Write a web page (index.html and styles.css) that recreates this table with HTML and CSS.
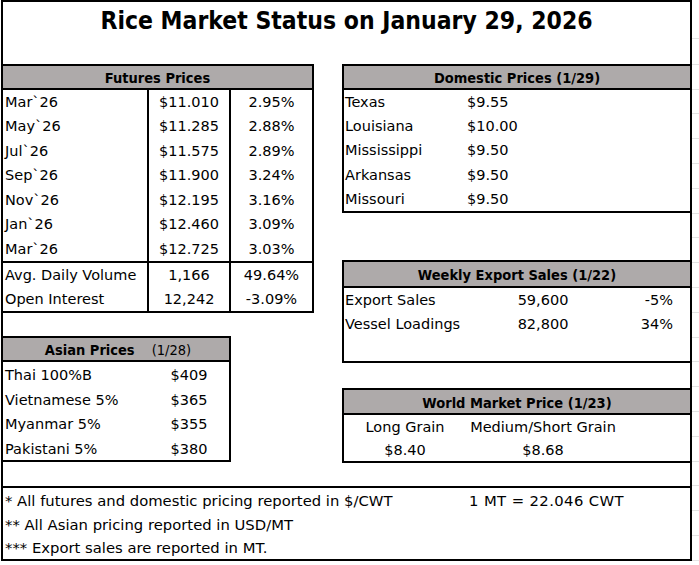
FILE: index.html
```html
<!DOCTYPE html>
<html>
<head>
<meta charset="utf-8">
<link rel="stylesheet" href="styles.css">
</head>
<body>
<div class="page">
  <div class="sheet">
    <div class="title">Rice Market Status on January 29, 2026</div>
    <div class="main">
      <div class="col-left">
        <div class="box futures">
          <div class="hdr">Futures Prices</div>
          <div class="ftable">
            <div class="c1">Mar`26</div><div class="c2">$11.010</div><div class="c3">2.95%</div>
            <div class="c1">May`26</div><div class="c2">$11.285</div><div class="c3">2.88%</div>
            <div class="c1">Jul`26</div><div class="c2">$11.575</div><div class="c3">2.89%</div>
            <div class="c1">Sep`26</div><div class="c2">$11.900</div><div class="c3">3.24%</div>
            <div class="c1">Nov`26</div><div class="c2">$12.195</div><div class="c3">3.16%</div>
            <div class="c1">Jan`26</div><div class="c2">$12.460</div><div class="c3">3.09%</div>
            <div class="c1">Mar`26</div><div class="c2">$12.725</div><div class="c3">3.03%</div>
          </div>
          <div class="ftable stats">
            <div class="c1">Avg. Daily Volume</div><div class="c2">1,166</div><div class="c3">49.64%</div>
            <div class="c1">Open Interest</div><div class="c2">12,242</div><div class="c3">-3.09%</div>
          </div>
        </div>
        <div class="box asian">
          <div class="hdr"><span class="b">Asian Prices</span><span class="date">(1/28)</span></div>
          <div class="atable">
            <div class="l">Thai 100%B</div><div class="v">$409</div>
            <div class="l">Vietnamese 5%</div><div class="v">$365</div>
            <div class="l">Myanmar 5%</div><div class="v">$355</div>
            <div class="l">Pakistani 5%</div><div class="v">$380</div>
          </div>
        </div>
      </div>
      <div class="col-right">
        <div class="box rbox domestic">
          <div class="hdr">Domestic Prices (1/29)</div>
          <div class="rtable">
            <div class="l">Texas</div><div class="v">$9.55</div><div></div>
            <div class="l">Louisiana</div><div class="v">$10.00</div><div></div>
            <div class="l">Mississippi</div><div class="v">$9.50</div><div></div>
            <div class="l">Arkansas</div><div class="v">$9.50</div><div></div>
            <div class="l">Missouri</div><div class="v">$9.50</div><div></div>
          </div>
        </div>
        <div class="box rbox weekly">
          <div class="hdr">Weekly Export Sales (1/22)</div>
          <div class="rtable wk">
            <div class="l">Export Sales</div><div class="m">59,600</div><div class="p">-5%</div>
            <div class="l">Vessel Loadings</div><div class="m">82,800</div><div class="p">34%</div>
            <div class="l"></div><div class="m"></div><div class="p"></div>
          </div>
        </div>
        <div class="box rbox world">
          <div class="hdr">World Market Price (1/23)</div>
          <div class="rtable wm">
            <div class="m">Long Grain</div><div class="m">Medium/Short Grain</div><div></div>
            <div class="m">$8.40</div><div class="m">$8.68</div><div></div>
          </div>
        </div>
      </div>
    </div>
    <div class="footer">
      <div class="fn">* All futures and domestic pricing reported in $/CWT</div><div class="fn mt">1 MT = 22.046 CWT</div>
      <div class="fn">** All Asian pricing reported in USD/MT</div><div></div>
      <div class="fn">*** Export sales are reported in MT.</div><div></div>
    </div>
  </div>
  <div class="grid-edge"></div>
</div>
</body>
</html>
```
FILE: styles.css
```css
* { box-sizing: border-box; }
html, body { margin: 0; padding: 0; background: #fff; }
body {
  font-family: "DejaVu Sans", sans-serif;
  color: #000;
  font-size: 14.5px;
}
.page {
  display: flex;
  align-items: flex-start;
  padding-left: 1px;
}
.sheet {
  width: 691px;
  height: 561px;
  border: 2px solid #000;
  display: flex;
  flex-direction: column;
}
.grid-edge {
  width: 7px;
  height: 565px;
  background:
    linear-gradient(#e3e3e3, #e3e3e3) 0 38px / 100% 1px no-repeat,
    repeating-linear-gradient(to bottom, transparent 0, transparent 23.8px, #e3e3e3 23.8px, #e3e3e3 24.8px) 0 40px / 100% 100% no-repeat;
}
.title {
  height: 62px;
  padding-top: 1px;
  line-height: 36px;
  text-align: center;
  font-family: "DejaVu Sans Condensed", "DejaVu Sans", sans-serif;
  font-size: 24.5px;
  font-weight: bold;
}
.main {
  height: 398px;
  display: flex;
  gap: 28px;
}
.col-left {
  width: 311px;
  display: flex;
  flex-direction: column;
}
.col-right {
  flex: 1;
  display: flex;
  flex-direction: column;
}
.box {
  border-top: 2px solid #000;
  border-bottom: 2px solid #000;
}
.hdr {
  background: #aeaaaa;
  border-bottom: 2px solid #000;
  height: 24px;
  line-height: 23px;
  padding-top: 1px;
  text-align: center;
  font-family: "DejaVu Sans Condensed", "DejaVu Sans", sans-serif;
  font-weight: bold;
  white-space: nowrap;
}
.futures {
  border-right: 2px solid #000;
}
.ftable {
  display: grid;
  grid-template-columns: 144px 82px 83px;
  grid-auto-rows: 24.5px;
  line-height: 25px;
}
.ftable.stats {
  border-top: 2px solid #000;
  grid-auto-rows: 24px;
  line-height: 25px;
}
.c1 { padding-left: 2px; white-space: nowrap; }
.c2, .c3 { border-left: 2px solid #000; text-align: center; white-space: nowrap; }
.asian {
  margin-top: 23px;
  width: 228px;
  border-right: 2px solid #000;
}
.asian .hdr { padding-left: 4px; }
.asian .date { font-weight: normal; margin-left: 17px; }
.atable {
  display: grid;
  grid-template-columns: 146px 80px;
  grid-auto-rows: 24.5px;
  line-height: 26px;
}
.atable .l { padding-left: 2px; white-space: nowrap; }
.atable .v { text-align: center; }
.rbox {
  border-left: 2px solid #000;
}
.rtable {
  display: grid;
  grid-template-columns: 122px 154px 1fr;
  grid-auto-rows: 24.2px;
  line-height: 25px;
}
.rtable .l { padding-left: 1px; white-space: nowrap; }
.rtable .v { padding-left: 1px; }
.rtable .m { text-align: center; white-space: nowrap; }
.rtable .p { text-align: right; padding-right: 17px; }
.weekly { margin-top: 47px; }
.weekly .hdr { height: 26px; line-height: 25px; }
.rtable.wk { grid-auto-rows: 24.5px; line-height: 25px; }
.rtable.wk > :nth-last-child(-n+3) { height: 23px; }
.world { margin-top: 25px; }
.world .hdr { height: 25px; line-height: 24px; }
.rtable.wm { grid-auto-rows: 23px; line-height: 24px; }
.footer {
  margin-top: 24px;
  border-top: 2px solid #000;
  display: grid;
  grid-template-columns: 464px 1fr;
  grid-auto-rows: 23.7px;
  line-height: 25px;
}
.fn {
  padding-left: 2px;
  white-space: nowrap;
  font-size: 14.8px;
}
.fn.mt { letter-spacing: 0.4px; }
```
